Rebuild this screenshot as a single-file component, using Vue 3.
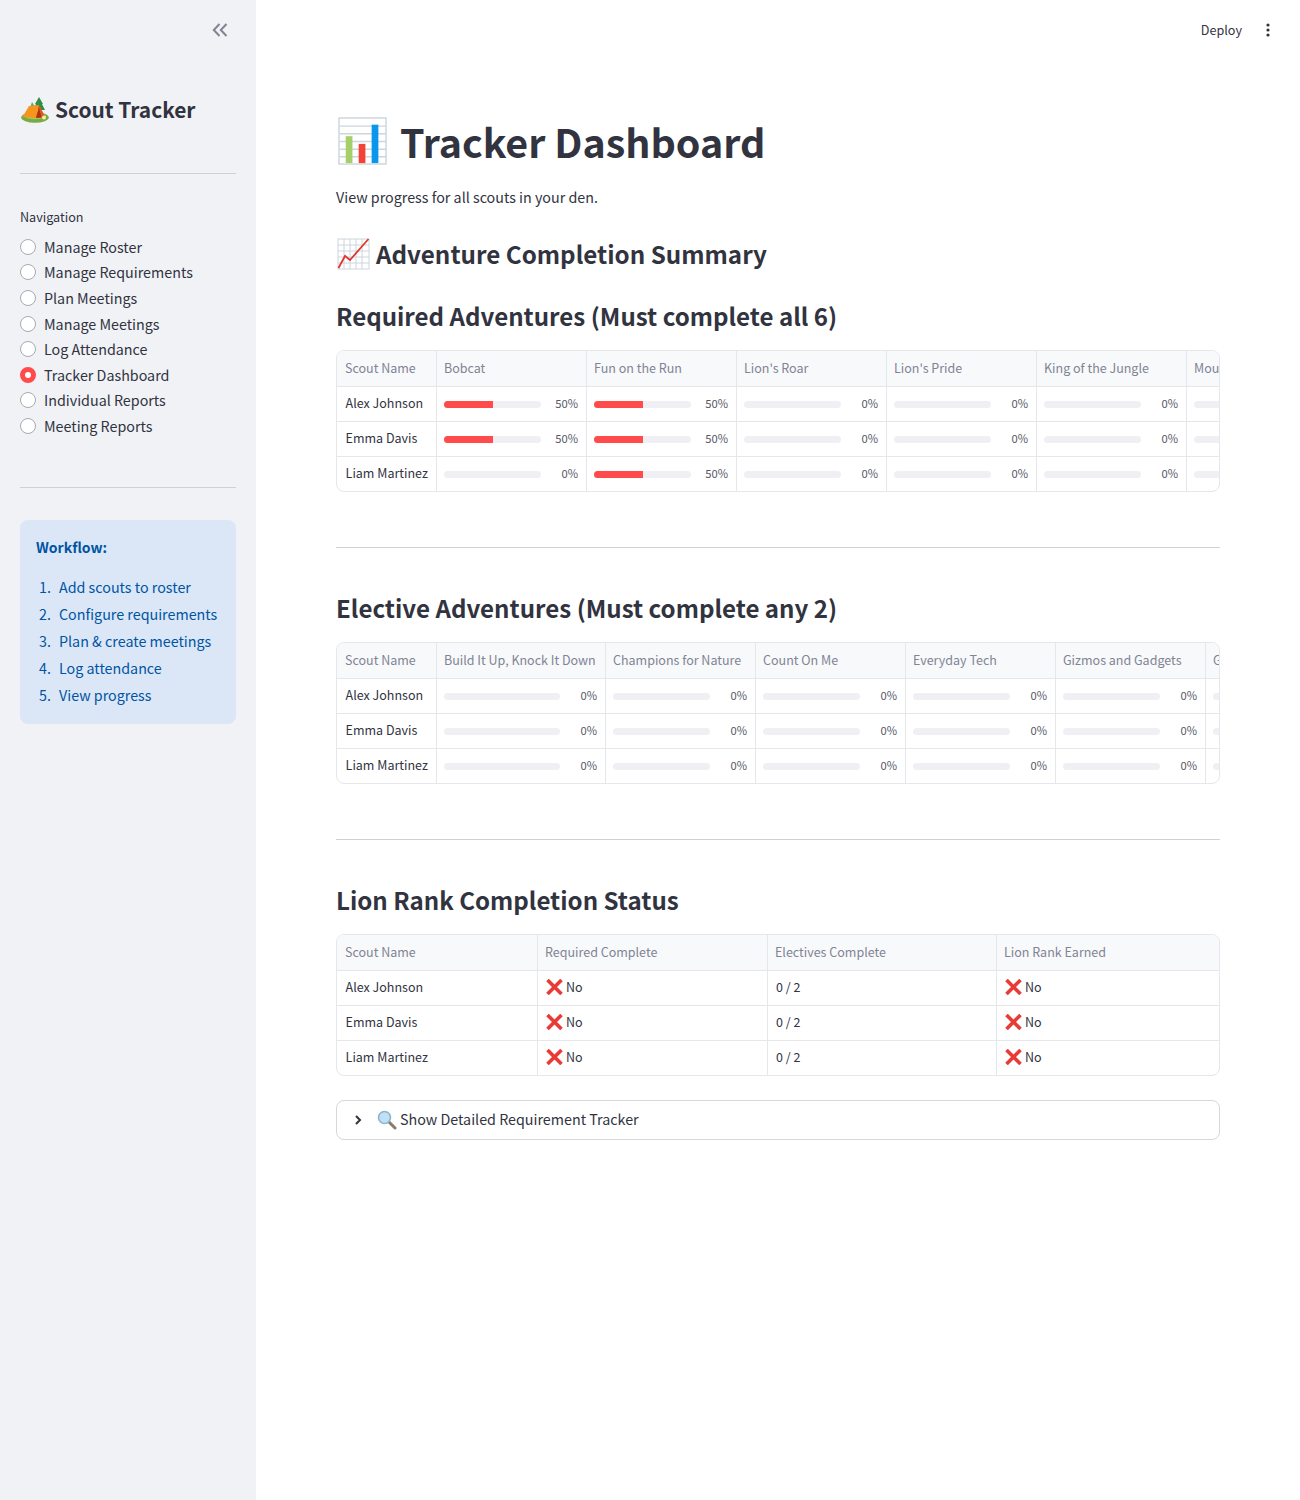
<script setup>
const navItems = [
  'Manage Roster', 'Manage Requirements', 'Plan Meetings', 'Manage Meetings',
  'Log Attendance', 'Tracker Dashboard', 'Individual Reports', 'Meeting Reports',
]
const workflow = [
  'Add scouts to roster', 'Configure requirements', 'Plan & create meetings',
  'Log attendance', 'View progress',
]
const required = {
  heads: ['Bobcat', 'Fun on the Run', "Lion's Roar", "Lion's Pride", 'King of the Jungle', 'Mountain Lion'],
  widths: [150, 150, 150, 150, 150, 150],
  rows: [
    { name: 'Alex Johnson', vals: [50, 50, 0, 0, 0, 0] },
    { name: 'Emma Davis', vals: [50, 50, 0, 0, 0, 0] },
    { name: 'Liam Martinez', vals: [0, 50, 0, 0, 0, 0] },
  ],
}
const elective = {
  heads: ['Build It Up, Knock It Down', 'Champions for Nature', 'Count On Me', 'Everyday Tech', 'Gizmos and Gadgets', 'Go Fish'],
  widths: [169, 150, 150, 150, 150, 150],
  rows: [
    { name: 'Alex Johnson', vals: [0, 0, 0, 0, 0, 0] },
    { name: 'Emma Davis', vals: [0, 0, 0, 0, 0, 0] },
    { name: 'Liam Martinez', vals: [0, 0, 0, 0, 0, 0] },
  ],
}
const scouts = ['Alex Johnson', 'Emma Davis', 'Liam Martinez']
const tables = [
  { title: 'Required Adventures (Must complete all 6)', data: required },
  { title: 'Elective Adventures (Must complete any 2)', data: elective },
]
const tableWidth = (d) => 100 + d.widths.reduce((a, b) => a + b, 0)
</script>

<template>
  <div class="app">
    <aside class="side">
      <div class="side-top">
        <svg class="collapse" width="16" height="14" viewBox="0 0 16 14" fill="none" stroke="#808495" stroke-width="2">
          <path d="M7.5 1 L1.8 7 L7.5 13" /><path d="M14.5 1 L8.8 7 L14.5 13" />
        </svg>
      </div>
      <h2 class="brand">
        <svg class="tent" width="28" height="26" viewBox="0 0 28 26">
          <path d="M18 0 L22 7 L21 7 L24 13 L12 13 L15 7 L14 7 Z" fill="#2f8f46" />
          <path d="M11 5 L14 10 L13 10 L16 14 L8 14 Z" fill="#4caf62" />
          <ellipse cx="14" cy="20.5" rx="13.8" ry="5.2" fill="#77ab43" />
          <ellipse cx="14" cy="19" rx="11" ry="3.2" fill="#a4c65a" />
          <path d="M8 9 L18 8 L15 21 L1.5 20 Z" fill="#f7941d" />
          <path d="M18 8 L24.5 20 L15 21 Z" fill="#e4571f" />
          <path d="M18 10.5 L20.5 20.4 L15 21 Z" fill="#a93410" />
          <circle cx="23" cy="20.5" r="2" fill="#ffe9a8" />
        </svg>
        <span>Scout Tracker</span>
      </h2>
      <hr class="side-rule first" />
      <div class="nav-label">Navigation</div>
      <div class="nav">
        <div v-for="item in navItems" :key="item" class="nav-row">
          <span class="radio" :class="{ on: item === 'Tracker Dashboard' }"></span>
          <span>{{ item }}</span>
        </div>
      </div>
      <hr class="side-rule second" />
      <div class="info">
        <p class="info-title">Workflow:</p>
        <ol class="info-list">
          <li v-for="(w, i) in workflow" :key="w">
            <span class="num">{{ i + 1 }}.</span><span>{{ w }}</span>
          </li>
        </ol>
      </div>
    </aside>

    <main class="main">
      <header class="top">
        <span class="deploy">Deploy</span>
        <svg class="kebab" width="4" height="14" viewBox="0 0 4 14" fill="#31333f">
          <circle cx="2" cy="2" r="1.6" /><circle cx="2" cy="7" r="1.6" /><circle cx="2" cy="12" r="1.6" />
        </svg>
      </header>

      <div class="content">
        <h1 class="title">
          <svg width="50" height="48" viewBox="0 0 52 50">
            <rect x="1" y="1" width="49" height="48" fill="#fff" stroke="#ccd6dd" stroke-width="1.5" />
            <path d="M2 9.5 H50 M2 17.5 H50 M2 25.5 H50 M2 33.5 H50 M2 41.5 H50" stroke="#ccd6dd" stroke-width="1.5" />
            <rect x="8" y="20" width="7" height="28" fill="#a5d069" />
            <rect x="21.5" y="28" width="7" height="20" fill="#f44336" />
            <rect x="35" y="8" width="7" height="40" fill="#0a96ec" />
          </svg>
          <span>Tracker Dashboard</span>
        </h1>
        <p class="lead">View progress for all scouts in your den.</p>
        <h2 class="summary">
          <svg width="33" height="32" viewBox="0 0 33 32">
            <rect x="1" y="1" width="31" height="30" fill="#fff" stroke="#ccd6dd" />
            <path d="M7 1 V31 M13 1 V31 M19 1 V31 M25 1 V31 M1 7 H32 M1 13 H32 M1 19 H32 M1 25 H32" stroke="#ccd6dd" stroke-width="1" />
            <path d="M1.5 30 L8 18 L13 22 L31.5 1" fill="none" stroke="#e5352f" stroke-width="1.8" />
          </svg>
          <span>Adventure Completion Summary</span>
        </h2>

        <section v-for="t in tables" :key="t.title" class="block">
          <h3 class="sub">{{ t.title }}</h3>
          <div class="grid-wrap">
            <table class="grid" :style="{ width: tableWidth(t.data) + 'px' }">
              <thead>
                <tr>
                  <th class="name-col">Scout Name</th>
                  <th v-for="(h, hi) in t.data.heads" :key="h" :style="{ width: t.data.widths[hi] + 'px' }">{{ h }}</th>
                </tr>
              </thead>
              <tbody>
                <tr v-for="row in t.data.rows" :key="row.name">
                  <td class="name-col">{{ row.name }}</td>
                  <td v-for="(v, vi) in row.vals" :key="vi">
                    <div class="prog">
                      <div class="track"><div class="fill" :style="{ width: v + '%' }"></div></div>
                      <span class="pct">{{ v }}%</span>
                    </div>
                  </td>
                </tr>
              </tbody>
            </table>
          </div>
          <hr class="main-rule" />
        </section>

        <section class="block">
          <h3 class="sub">Lion Rank Completion Status</h3>
          <div class="grid-wrap">
            <table class="grid full">
              <thead>
                <tr>
                  <th class="w1">Scout Name</th>
                  <th class="w2">Required Complete</th>
                  <th class="w3">Electives Complete</th>
                  <th>Lion Rank Earned</th>
                </tr>
              </thead>
              <tbody>
                <tr v-for="s in scouts" :key="s">
                  <td>{{ s }}</td>
                  <td>
                    <span class="no">
                      <svg width="17" height="16" viewBox="0 0 17 16"><path d="M1.5 1 L15.5 15 M15.5 1 L1.5 15" stroke="#e83b36" stroke-width="3.6" /></svg>No
                    </span>
                  </td>
                  <td>0 / 2</td>
                  <td>
                    <span class="no">
                      <svg width="17" height="16" viewBox="0 0 17 16"><path d="M1.5 1 L15.5 15 M15.5 1 L1.5 15" stroke="#e83b36" stroke-width="3.6" /></svg>No
                    </span>
                  </td>
                </tr>
              </tbody>
            </table>
          </div>
        </section>

        <div class="expander">
          <svg class="chev" width="8" height="12" viewBox="0 0 8 12" fill="none" stroke="#31333f" stroke-width="2"><path d="M2 2 L6 6 L2 10" /></svg>
          <svg class="glass" width="20" height="20" viewBox="0 0 20 20">
            <path d="M12 12 L18 18" stroke="#8a7a6a" stroke-width="3" stroke-linecap="round" />
            <circle cx="7.5" cy="7.5" r="6" fill="#bfe0f5" stroke="#8fb4cf" stroke-width="1.6" />
          </svg>
          <span class="exp-label">Show Detailed Requirement Tracker</span>
        </div>
      </div>
    </main>
  </div>
</template>

<style>
html, body { margin: 0; background: #fff; }
</style>

<style scoped>
.app {
  display: flex;
  min-height: 1500px;
  font-family: "Noto Sans CJK SC", "Noto Sans", sans-serif;
  color: #31333f;
}

/* sidebar */
.side {
  width: 256px;
  flex: none;
  box-sizing: border-box;
  background: #f0f2f6;
  padding: 0 20px;
}
.side-top {
  height: 60px;
  display: flex;
  justify-content: flex-end;
  align-items: center;
  padding-right: 8px;
}
.brand {
  margin: 24px 0 0;
  height: 52px;
  display: flex;
  align-items: center;
  gap: 6px;
  font-size: 20.9px;
  font-weight: 600;
  line-height: 52px;
}
.brand span { padding-bottom: 2px; }
.tent { margin-left: 1px; }
.side-rule { border: none; border-top: 1px solid #cfd1d6; margin: 0; }
.side-rule.first { margin-top: 37px; }
.side-rule.second { margin-top: 48.4px; }
.nav-label { margin-top: 33px; font-size: 12.6px; line-height: 20px; }
.nav { margin-top: 6.6px; }
.nav-row {
  display: flex;
  align-items: center;
  gap: 8px;
  height: 25.6px;
  font-size: 14.3px;
}
.radio {
  width: 16px;
  height: 16px;
  margin-top: 1px;
  box-sizing: border-box;
  border-radius: 50%;
  background: #fff;
  border: 1px solid #a8aab2;
}
.radio.on { border: 5px solid #ff4b4b; }
.info {
  margin-top: 32px;
  height: 204px;
  box-sizing: border-box;
  padding: 15px 16px;
  border-radius: 8px;
  background: #dbe7f7;
  color: #0054a3;
  font-size: 14.3px;
}
.info-title { margin: 0; font-size: 14px; font-weight: 700; line-height: 24px; }
.info-list { list-style: none; margin: 14px 0 0; padding: 0; }
.info-list li { display: flex; height: 27px; line-height: 27px; white-space: nowrap; }
.num { width: 23px; flex: none; padding-left: 3px; box-sizing: border-box; }

/* main */
.main { flex: 1; min-width: 0; }
.top {
  height: 60px;
  display: flex;
  justify-content: flex-end;
  align-items: center;
  gap: 24px;
  padding-right: 30px;
}
.deploy { font-size: 12.6px; padding-bottom: 2px; }
.content { padding: 45px 80px 0; }
.title {
  margin: 0;
  height: 72px;
  display: flex;
  align-items: center;
  gap: 12px;
  font-size: 39.4px;
  font-weight: 700;
  line-height: 72px;
}
.title svg { margin-left: 2px; }
.lead { margin: 0; padding-top: 8px; font-size: 14.3px; line-height: 24px; }
.summary {
  margin: 19px 0 0;
  height: 52px;
  display: flex;
  align-items: center;
  gap: 6px;
  font-size: 24.2px;
  font-weight: 600;
}
.summary span { padding-bottom: 2px; }
.summary svg { margin-left: 1px; }
.block { margin: 0; }
.block + .block { padding-top: 24px; }
.sub {
  margin: 10px 0 0;
  height: 52px;
  line-height: 52px;
  font-size: 24.1px;
  font-weight: 600;
}
.grid-wrap {
  margin-top: 8px;
  border: 1px solid #e6e7ea;
  border-radius: 8px;
  overflow: hidden;
}
.grid {
  border-collapse: separate;
  border-spacing: 0;
  table-layout: fixed;
  font-size: 12.5px;
}
.grid.full { width: 100%; }
.grid th {
  height: 36px;
  box-sizing: border-box;
  padding: 0 8px 2px 7px;
  background: #f8f9fb;
  color: #808495;
  font-weight: 400;
  text-align: left;
  white-space: nowrap;
  overflow: hidden;
  border-right: 1px solid #e6e7ea;
  border-bottom: 1px solid #e6e7ea;
}
.grid td {
  height: 35px;
  box-sizing: border-box;
  padding: 0 8px 3px 7px;
  white-space: nowrap;
  overflow: hidden;
  border-right: 1px solid #e6e7ea;
  border-bottom: 1px solid #e6e7ea;
}
.grid.full td { padding-left: 8px; }
.grid th:first-child { padding-left: 8px; }
.grid td:first-child, .grid.full td:first-child { padding-left: 8.6px; }
.grid tr:last-child td { border-bottom: none; height: 34px; }
.grid th:last-child, .grid td:last-child { border-right: none; }
.name-col { width: 100px; }
.w1 { width: 201px; }
.w2 { width: 230px; }
.w3 { width: 229px; }
.prog { display: flex; align-items: center; }
.track {
  flex: 1;
  min-width: 0;
  height: 7px;
  margin-top: 3px;
  border-radius: 4px;
  background: #f0eff4;
  overflow: hidden;
}
.fill { height: 100%; background: #ff4b4b; }
.pct { flex: none; width: 37px; text-align: right; font-size: 11.2px; color: #555867; }
.main-rule {
  border: none;
  border-top: 1px solid #cfd1d6;
  margin: 55px 0 0;
  height: 0;
}
.no { display: flex; align-items: center; gap: 3px; }
.expander {
  margin-top: 24px;
  height: 40px;
  box-sizing: border-box;
  border: 1px solid #d6d7dc;
  border-radius: 8px;
  display: flex;
  align-items: center;
  padding-left: 17px;
  font-size: 14.3px;
}
.exp-label { padding-bottom: 3px; }
.glass { margin-left: 15px; margin-right: 3px; }
</style>
